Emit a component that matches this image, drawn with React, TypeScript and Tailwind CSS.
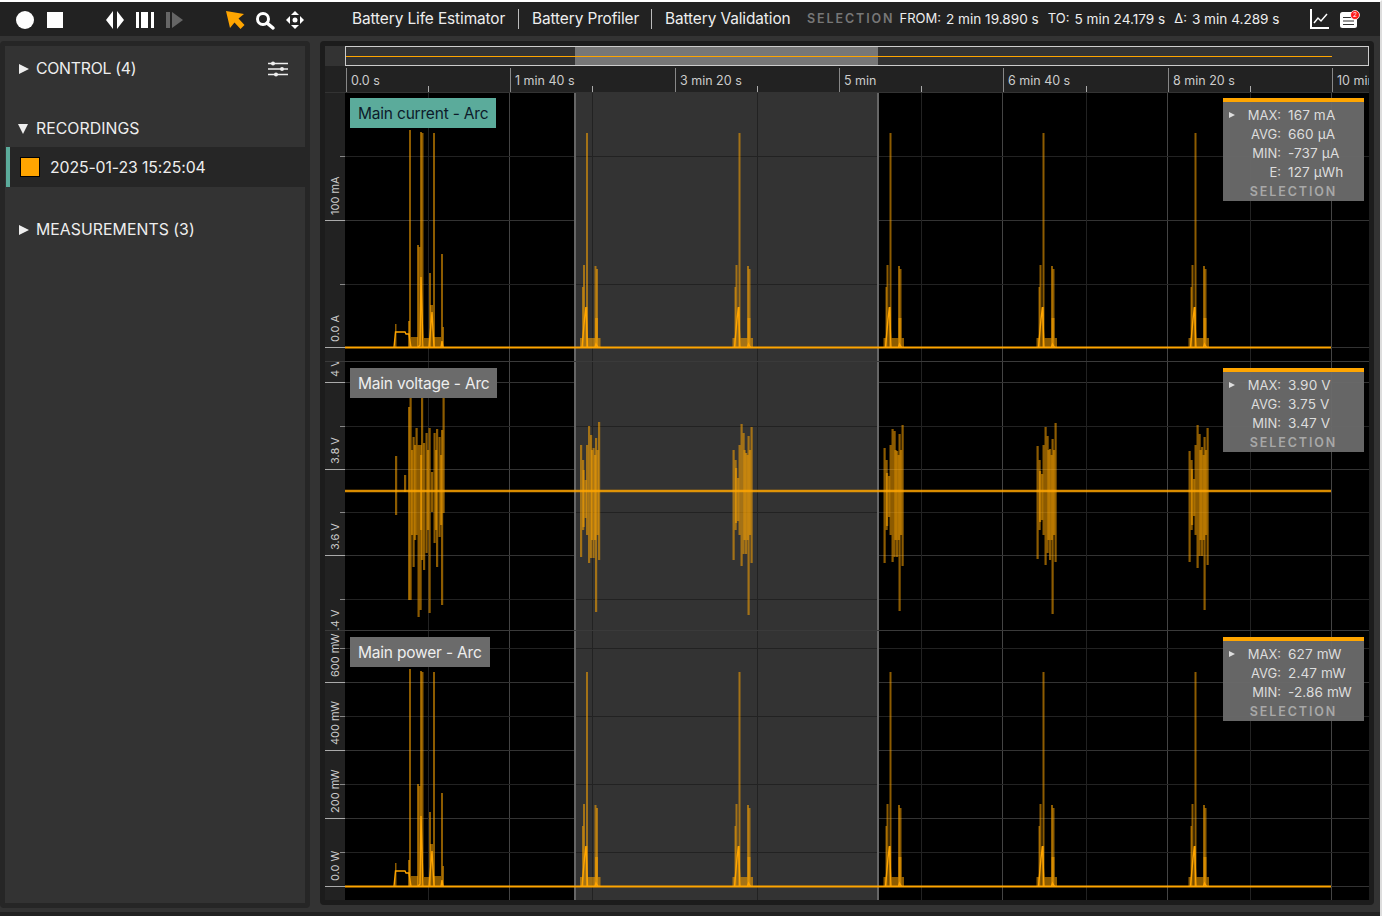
import React from "react";

const ORANGE = "#ffa500";
const FONT = "Inter, 'Liberation Sans', sans-serif";

const MAJOR_X = [510, 675, 839, 1003, 1168, 1332];
const MINOR_X = [428, 592, 757, 921, 1086, 1250];
const BURSTS = [580, 732.5, 883.5, 1036.5, 1188.5];
const SEL_A = 575;
const SEL_B = 878;

// current-shaped trace, y values are for the first pane, dy moves it to another pane
const FIRST_BURST: number[][] = [
  [395, 324, 1.5],
  [408, 321, 2],
  [409, 130, 2],
  [411, 337, 7],
  [417, 245, 2],
  [418.5, 247, 2],
  [420, 132, 2],
  [421.5, 133, 2],
  [424, 338, 6],
  [429, 273, 2],
  [430, 305, 3],
  [433, 133, 2],
  [434, 337, 7],
  [441, 254, 2],
  [442.5, 327, 1.5],
];

const BURST_TEMPLATE: number[][] = [
  [0, 338, 2.5],
  [2, 287, 1.5],
  [3, 265, 2],
  [5, 307, 2.5],
  [6, 133, 2],
  [8, 338, 7],
  [14.5, 266, 2],
  [16, 269, 2],
  [15, 318, 3],
  [18, 338, 2.5],
];

const CurrentTrace = ({ dy }: { dy: number }) => {
  const base = 347.5 + dy;
  const bars = [
    ...FIRST_BURST,
    ...BURSTS.flatMap((s) => BURST_TEMPLATE.map(([x, t, w]) => [s + x, t, w])),
  ];
  const peaks = [
    `M394 ${base} L395.500 ${332 + dy} L405 ${332 + dy} L406 ${334 + dy} L409 ${334 + dy} L411 ${base}`,
    `M418 ${base} L420 ${345 + dy} L421 ${277 + dy} L423 ${base} M429 ${base} L432 ${312 + dy} L434 ${base} M441 ${base} L442 ${341 + dy} L443 ${base}`,
    ...BURSTS.map(
      (s) =>
        `M${s + 2} ${base} L${s + 4.5} ${319 + dy} L${s + 6} ${307 + dy} L${s + 7.5} ${base} M${s + 15} ${base} L${s + 16} ${344 + dy} L${s + 18} ${base}`,
    ),
  ].join(" ");
  return (
    <g>
      {bars.map(([x, t, w], i) => (
        <rect key={i} x={x} y={t + dy} width={w} height={base - t - dy} fill={ORANGE} opacity={0.55} />
      ))}
      <path d={peaks} fill="none" stroke={ORANGE} strokeWidth={1.4} />
      <path d={`M345 ${base} L1331 ${base}`} stroke={ORANGE} strokeWidth={2} />
    </g>
  );
};

// x, top, bottom of the voltage spikes
const VOLT_FIRST: number[][] = [
  [395, 456, 515],
  [404, 475, 492],
  [408, 407, 600],
  [409.5, 390, 600],
  [412.5, 437, 567],
  [415.5, 428, 535],
  [417.5, 445, 617],
  [419.5, 445, 610],
  [421, 395, 560],
  [423, 443, 570],
  [425.5, 433, 553],
  [428.5, 428, 613],
  [431, 472, 512],
  [433.5, 433, 543],
  [436, 429, 567],
  [438.5, 437, 537],
  [441, 430, 605],
  [442.5, 395, 513],
];

const VOLT_TEMPLATE: number[][] = [
  [0, 448, 560],
  [2.5, 470, 525],
  [4.5, 477, 518],
  [8, 427, 565],
  [10, 433, 555],
  [12.5, 450, 557],
  [15, 437, 613],
  [18, 425, 563],
];

const VoltageTrace = () => {
  const bars = [
    ...VOLT_FIRST,
    ...BURSTS.flatMap((s, b) =>
      VOLT_TEMPLATE.map(([x, t, bottom], i) => [
        s + x,
        t + ((i * 3 + b * 5) % 7) - 3,
        bottom + ((i * 5 + b * 3) % 7) - 3,
      ]),
    ),
    // fill inside the bursts
    ...BURSTS.flatMap((s) => [
      [s + 2, 460, 530],
      [s + 6, 445, 535],
      [s + 11, 450, 540],
      [s + 14, 455, 540],
      [s + 16.500, 450, 535],
    ]),
    [411, 450, 535],
    [414, 445, 540],
    [420, 455, 530],
    [427, 450, 530],
    [435, 450, 530],
    [440, 455, 525],
  ];
  return (
    <g>
      {bars.map(([x, t, bottom], i) => (
        <rect key={i} x={x} y={t} width={2.2} height={bottom - t} fill={ORANGE} opacity={0.55} />
      ))}
      <path d="M345 491 L1331 491" stroke={ORANGE} strokeWidth={2.6} opacity={0.85} />
    </g>
  );
};

interface AxisTick {
  y: number;
  label?: string;
}

interface PaneProps {
  top: number;
  height: number;
  ticks: AxisTick[];
  children: React.ReactNode;
}

const Pane = ({ top, height, ticks, children }: PaneProps) => (
  <svg
    width={1044}
    height={height}
    viewBox={`325 ${top} 1044 ${height}`}
    className="block shrink-0 bg-black"
  >
    {MAJOR_X.map((x) => (
      <line key={x} x1={x - 0.5} x2={x - 0.5} y1={top} y2={top + height} stroke="#444444" />
    ))}
    {ticks
      .filter((t) => t.label)
      .map((t) => (
        <line key={t.y} x1={345} x2={1369} y1={t.y + 0.5} y2={t.y + 0.5} stroke="#333333" />
      ))}
    <rect x={SEL_A} y={top} width={SEL_B - SEL_A} height={height} fill="#333333" />
    {MINOR_X.map((x) => (
      <line key={x} x1={x + 0.5} x2={x + 0.5} y1={top} y2={top + height} stroke="#222222" />
    ))}
    {ticks
      .filter((t) => !t.label)
      .map((t) => (
        <line key={t.y} x1={345} x2={1369} y1={t.y + 0.5} y2={t.y + 0.5} stroke="#222222" />
      ))}
    <rect x={SEL_A - 1} y={top} width={2} height={height} fill="#666666" />
    <rect x={SEL_B - 1} y={top} width={2} height={height} fill="#666666" />
    {children}
    <rect x={325} y={top} width={20} height={height} fill="#222222" />
    {ticks.map((t) => (
      <g key={t.y}>
        <line
          x1={t.label ? 325 : 340}
          x2={345}
          y1={t.y + 0.5}
          y2={t.y + 0.5}
          stroke={t.label ? "#aaaaaa" : "#888888"}
        />
        {t.label && (
          <text
            transform={`translate(339 ${t.y - 5}) rotate(-90)`}
            fontSize={11}
            fill="#cccccc"
            fontFamily={FONT}
          >
            {t.label}
          </text>
        )}
      </g>
    ))}
  </svg>
);

const PaneLabel = ({ text, active, top }: { text: string; active?: boolean; top: string }) => (
  <div
    className={`absolute left-[25px] ${top} h-[30px] px-[8px] pt-[1px] flex items-center text-[15.5px] tracking-[-0.2px] ${
      active ? "bg-[#5bab9b] text-[#0d1b2a]" : "bg-[#6b6b6b] text-[#eeeeee]"
    }`}
  >
    {text}
  </div>
);

const StatBox = ({ rows, top }: { rows: string[][]; top: string }) => (
  <div
    className={`absolute left-[898px] ${top} w-[141px] bg-[#6b6b6b]/95 border-t-[4px] border-[#ffa500] pt-[4px] text-[13.6px] text-[#dddddd]`}
  >
    <div className="absolute left-[6px] top-[10px] w-0 h-0 border-y-[3px] border-y-transparent border-l-[6px] border-l-[#dddddd]" />
    {rows.map(([k, v]) => (
      <div key={k} className="flex h-[19px] items-center">
        <span className="w-[58px] text-right text-[13px]">{k}</span>
        <span className="ml-[7px] whitespace-nowrap tracking-[0.1px]">{v}</span>
      </div>
    ))}
    <div className="h-[19px] pt-[1px] flex items-center justify-center font-semibold tracking-[1.9px] text-[12.5px] text-[#a8a8a8]">
      SELECTION
    </div>
  </div>
);

const Triangle = ({ open }: { open?: boolean }) =>
  open ? (
    <span className="w-0 h-0 border-x-[5px] border-x-transparent border-t-[10px] border-t-[#eeeeee]" />
  ) : (
    <span className="w-0 h-0 border-y-[5px] border-y-transparent border-l-[10px] border-l-[#eeeeee]" />
  );

const Toolbar = () => (
  <div className="h-[34px] bg-[#222222] flex items-center text-[#eeeeee] shrink-0">
    <svg width={320} height={34} viewBox="0 2 320 34" className="shrink-0">
      <circle cx={25} cy={20} r={9} fill="#ffffff" />
      <rect x={47} y={12} width={16} height={16} fill="#ffffff" />
      <path d="M106 20l7-9v18zM124 20l-7-9v18z" fill="#ffffff" />
      <path d="M136 12h3v16h-3zM141 12h7v16h-7zM151 12h3v16h-3z" fill="#ffffff" />
      <path d="M166 12h4v16h-4zM172 12l11 8-11 8z" fill="#666666" />
      <path d="M226 11L244 14L238.500 18.500L244.500 25L240.500 29L234.500 22.500L230 28Z" fill={ORANGE} />
      <circle cx={263} cy={19} r={5.500} fill="none" stroke="#ffffff" strokeWidth={3} />
      <path d="M267 23l6 5" stroke="#ffffff" strokeWidth={3.500} strokeLinecap="round" />
      <path d="M295 11l4 4h-8zM295 29l4-4h-8zM286 20l4-4v8zM304 20l-4-4v8z" fill="#ffffff" />
      <circle cx={295} cy={20} r={2.500} fill="#ffffff" />
    </svg>
    <div className="flex items-center text-[15.4px] tracking-[-0.1px] ml-[32px] whitespace-nowrap">
      <span className="w-[166px]">Battery Life Estimator</span>
      <span className="w-px h-[20px] bg-[#bbbbbb]" />
      <span className="w-[132px] pl-[13px]">Battery Profiler</span>
      <span className="w-px h-[20px] bg-[#bbbbbb]" />
      <span className="pl-[13px] w-[155px]">Battery Validation</span>
    </div>
    <div className="flex items-center text-[13.6px] whitespace-nowrap">
      <span className="font-semibold text-[12.5px] tracking-[1.9px] text-[#777777]">SELECTION</span>
      <span className="ml-[5px] text-[13px]">FROM:</span>
      <span className="ml-[5px]">2 min 19.890 s</span>
      <span className="ml-[9px] text-[13px]">TO:</span>
      <span className="ml-[5px]">5 min 24.179 s</span>
      <span className="ml-[9px] text-[13px]">Δ:</span>
      <span className="ml-[5px]">3 min 4.289 s</span>
    </div>
    <svg width={52} height={24} viewBox="0 0 52 24" className="ml-auto mr-[19px] overflow-visible">
      <path d="M2 2v19h18" fill="none" stroke="#ffffff" strokeWidth={2} />
      <path d="M5 16l4-5 3 3 6-7" fill="none" stroke="#ffffff" strokeWidth={1.500} />
      <rect x={31} y={5} width={17} height={16} rx={2.500} fill="#ffffff" />
      <path d="M34 10.500h11M34 14h11M34 17.500h11" stroke="#333333" strokeWidth={1.200} />
      <circle cx={46} cy={8} r={4.500} fill="#ff1a1a" stroke="#ffffff" strokeWidth={0.800} />
      <text x={46} y={10.300} fontSize={6.500} textAnchor="middle" fill="#ffffff" fontFamily={FONT}>
        2
      </text>
    </svg>
  </div>
);

const Sidebar = () => (
  <aside className="w-[310px] h-[867px] shrink-0 bg-[#333333] border-[5px] border-[#262626] rounded-[4px] text-[#eeeeee] text-[15.8px] tracking-[-0.1px]">
    <div className="flex items-center h-[44px] mt-[1px] pl-[14px] pr-[17px]">
      <Triangle />
      <span className="ml-[7px] tracking-[-0.25px]">CONTROL (4)</span>
      <svg width={20} height={16} viewBox="0 0 20 16" className="ml-auto">
        <path d="M0 2.500h20M0 8h20M0 13.500h20" stroke="#eeeeee" strokeWidth={1.500} />
        <circle cx={5} cy={2.500} r={2} fill="#eeeeee" />
        <circle cx={14} cy={8} r={2} fill="#eeeeee" />
        <circle cx={8} cy={13.500} r={2} fill="#eeeeee" />
      </svg>
    </div>
    <div className="flex items-center h-[20px] mt-[28px] pl-[13px]">
      <Triangle open />
      <span className="ml-[8px] tracking-[0.05px]">RECORDINGS</span>
    </div>
    <div className="flex items-center h-[40px] mt-[8px] ml-[1px] bg-[#262626] border-l-[4px] border-[#5bab9b] pl-[10px]">
      <span className="w-[20px] h-[20px] bg-[#ffa500] border border-black" />
      <span className="ml-[10px] pt-[2px]">2025-01-23 15:25:04</span>
    </div>
    <div className="flex items-center h-[20px] mt-[33px] pl-[14px]">
      <Triangle />
      <span className="ml-[7px] tracking-[0.05px]">MEASUREMENTS (3)</span>
    </div>
  </aside>
);

const TimeAxis = () => (
  <svg width={1044} height={47} viewBox="325 46 1044 47" className="block shrink-0">
    <rect x={325} y={46} width={1044} height={47} fill="#222222" />
    <rect x={325} y={46} width={20} height={20} fill="#333333" />
    <rect x={345.500} y={46.500} width={1023} height={19} fill="#333333" stroke="#cccccc" />
    <rect x={SEL_A} y={47} width={SEL_B - SEL_A} height={18} fill="#777777" />
    <line x1={346} x2={1332} y1={56.500} y2={56.500} stroke={ORANGE} />
    <line x1={325} x2={1369} y1={92.500} y2={92.500} stroke="#333333" />
    {[346, ...MAJOR_X].map((x, i) => (
      <g key={x}>
        <line x1={x + 0.5} x2={x + 0.5} y1={68} y2={92} stroke="#888888" />
        <text x={x + 5} y={85} fontSize={12.500} fill="#cccccc" fontFamily={FONT}>
          {["0.0 s", "1 min 40 s", "3 min 20 s", "5 min", "6 min 40 s", "8 min 20 s", "10 min"][i]}
        </text>
      </g>
    ))}
    {MINOR_X.map((x) => (
      <line key={x} x1={x + 0.5} x2={x + 0.5} y1={86} y2={92} stroke="#aaaaaa" />
    ))}
  </svg>
);

export default function App() {
  return (
    <div
      className="w-[1382px] h-[916px] overflow-hidden bg-[#333333] border-t-[2px] border-r-[2px] border-t-white border-r-[#dddddd] flex flex-col"
      style={{ fontFamily: FONT }}
    >
      <Toolbar />
      <div className="flex-1 flex items-start pt-[5px] gap-[10px] min-h-0">
        <Sidebar />
        <main className="w-[1054px] h-[864px] shrink-0 bg-[#1c1c1c] rounded-[4px] p-[5px]">
          <TimeAxis />
          <div className="relative w-[1044px] border-b border-[#3a3a3a]">
            <Pane
              top={93}
              height={268}
              ticks={[{ y: 156 }, { y: 220, label: "100 mA" }, { y: 284 }, { y: 347, label: "0.0 A" }]}
            >
              <CurrentTrace dy={0} />
            </Pane>
            <PaneLabel text="Main current - Arc" active top="top-[5px]" />
            <StatBox
              top="top-[5px]"
              rows={[
                ["MAX:", "167 mA"],
                ["AVG:", "660 µA"],
                ["MIN:", "-737 µA"],
                ["E:", "127 µWh"],
              ]}
            />
          </div>
          <div className="relative w-[1044px] border-b border-[#3a3a3a]">
            <Pane
              top={362}
              height={268}
              ticks={[
                { y: 382, label: "4 V" },
                { y: 426 },
                { y: 469, label: "3.8 V" },
                { y: 512 },
                { y: 555, label: "3.6 V" },
                { y: 599 },
                { y: 642, label: "3.4 V" },
              ]}
            >
              <VoltageTrace />
            </Pane>
            <PaneLabel text="Main voltage - Arc" top="top-[6px]" />
            <StatBox
              top="top-[6px]"
              rows={[
                ["MAX:", "3.90 V"],
                ["AVG:", "3.75 V"],
                ["MIN:", "3.47 V"],
              ]}
            />
          </div>
          <div className="relative w-[1044px] bg-[#222222] h-[269px]">
            <Pane
              top={631}
              height={269}
              ticks={[
                { y: 648 },
                { y: 682, label: "600 mW" },
                { y: 716 },
                { y: 750, label: "400 mW" },
                { y: 784 },
                { y: 818, label: "200 mW" },
                { y: 852 },
                { y: 886, label: "0.0 W" },
              ]}
            >
              <CurrentTrace dy={539} />
            </Pane>
            <PaneLabel text="Main power - Arc" top="top-[6px]" />
            <StatBox
              top="top-[6px]"
              rows={[
                ["MAX:", "627 mW"],
                ["AVG:", "2.47 mW"],
                ["MIN:", "-2.86 mW"],
              ]}
            />
          </div>
        </main>
      </div>
      <div className="h-[4px] bg-[#222222] shrink-0" />
    </div>
  );
}
